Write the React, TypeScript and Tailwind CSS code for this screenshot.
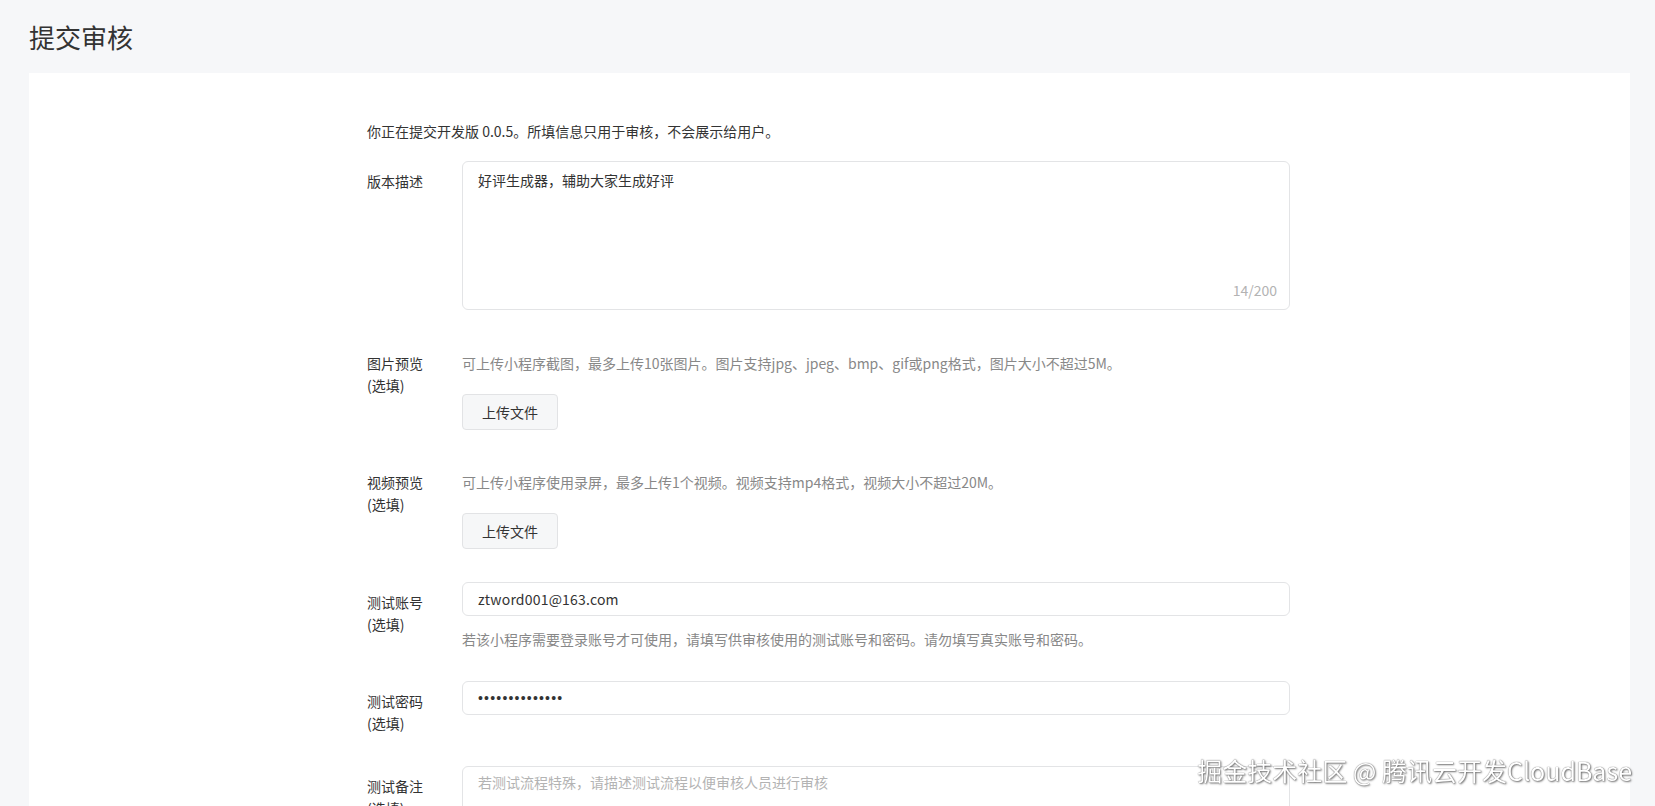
import React from "react";

function Row({
	label,
	optional,
	className,
	children,
}: {
	label: string;
	optional?: boolean;
	className: string;
	children: React.ReactNode;
}) {
	return (
		<div className={`flex ${className}`}>
			<div className="w-[95px] shrink-0 pt-[9px] text-[14px] leading-[22px] text-[#333]">
				<div>{label}</div>
				{optional && <div>(选填)</div>}
			</div>
			<div className="w-[828px]">{children}</div>
		</div>
	);
}

function UploadButton() {
	return (
		<button className="h-[36px] w-[96px] rounded-[4px] border border-[#e2e3e5] bg-[#f6f7f8] text-[14px] text-[#333]">
			上传文件
		</button>
	);
}

export default function App() {
	return (
		<div className="min-h-screen bg-[#f6f7f9] [font-family:'Noto_Sans_CJK_SC','Microsoft_YaHei',sans-serif] text-[#333]">
			<div className="h-[73px] flex items-center pl-[29px] text-[26px]">提交审核</div>

			<div className="ml-[29px] mr-[25px] bg-white pl-[338px] pt-[47px] pb-[60px]">
				<p className="text-[14px] leading-[22px]">
					你正在提交开发版 0.0.5。所填信息只用于审核，不会展示给用户。
				</p>

				<Row label="版本描述" className="mt-[19px]">
					<div className="relative h-[149px] rounded-[6px] border border-[#e3e4e6]">
						<textarea
							readOnly
							defaultValue="好评生成器，辅助大家生成好评"
							className="h-full w-full resize-none bg-transparent px-[15px] pt-[7px] text-[14px] leading-[22px] text-[#333] outline-none"
						/>
						<span className="absolute right-[12px] bottom-[8px] text-[14px] leading-[22px] text-[#b3b3b3]">
							14/200
						</span>
					</div>
				</Row>

				<Row label="图片预览" optional className="mt-[33px]">
					<p className="pt-[9px] text-[14px] leading-[22px] text-[#888]">
						可上传小程序截图，最多上传10张图片。图片支持jpg、jpeg、bmp、gif或png格式，图片大小不超过5M。
					</p>
					<div className="mt-[20px]">
						<UploadButton />
					</div>
				</Row>

				<Row label="视频预览" optional className="mt-[32px]">
					<p className="pt-[9px] text-[14px] leading-[22px] text-[#888]">
						可上传小程序使用录屏，最多上传1个视频。视频支持mp4格式，视频大小不超过20M。
					</p>
					<div className="mt-[20px]">
						<UploadButton />
					</div>
				</Row>

				<Row label="测试账号" optional className="mt-[33px]">
					<input
						readOnly
						value="ztword001@163.com"
						className="block h-[34px] w-full rounded-[6px] border border-[#e3e4e6] px-[15px] text-[14px] tracking-[0.2px] text-[#333] outline-none"
					/>
					<p className="mt-[12px] text-[14px] leading-[22px] text-[#888]">
						若该小程序需要登录账号才可使用，请填写供审核使用的测试账号和密码。请勿填写真实账号和密码。
					</p>
				</Row>

				<Row label="测试密码" optional className="mt-[31px]">
					<input
						readOnly
						type="password"
						value="abcdefghijklmn"
						className="block h-[34px] w-full rounded-[6px] border border-[#e3e4e6] px-[15px] [font-family:'Liberation_Sans',sans-serif] text-[14px] tracking-[1.2px] text-[#333] outline-none"
					/>
				</Row>

				<Row label="测试备注" optional className="mt-[32px]">
					<textarea
						placeholder="若测试流程特殊，请描述测试流程以便审核人员进行审核"
						className="block h-[149px] w-full resize-none rounded-[6px] border border-[#e3e4e6] px-[15px] pt-[4px] text-[14px] leading-[22px] text-[#333] outline-none placeholder:text-[#b3b3b3]"
					/>
				</Row>
			</div>

			<div className="pointer-events-none fixed right-[23px] bottom-[21px] whitespace-nowrap text-[25px] leading-[30px] text-white [text-shadow:0_0_1px_#444,1px_1px_2px_rgba(0,0,0,0.55)]">
				掘金技术社区 @ 腾讯云开发CloudBase
			</div>
		</div>
	);
}
